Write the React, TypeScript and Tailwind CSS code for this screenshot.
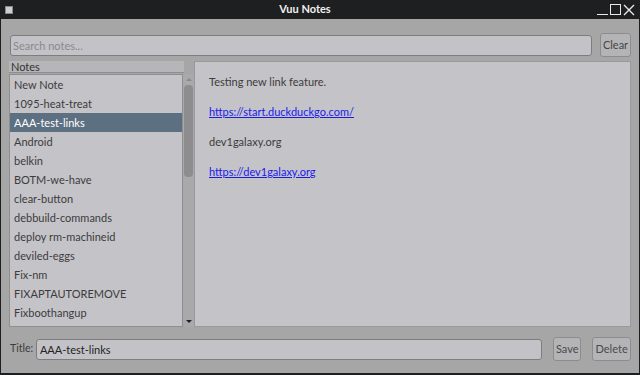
import { useState } from 'react';

const notes = [
  'New Note',
  '1095-heat-treat',
  'AAA-test-links',
  'Android',
  'belkin',
  'BOTM-we-have',
  'clear-button',
  'debbuild-commands',
  'deploy rm-machineid',
  'deviled-eggs',
  'Fix-nm',
  'FIXAPTAUTOREMOVE',
  'Fixboothangup',
];

const font = { fontFamily: 'Lato, "Open Sans", sans-serif' };

export default function App() {
  const [selected, setSelected] = useState('AAA-test-links');
  return (
    <div className="w-[640px] h-[375px] flex flex-col bg-[#1e1f21] text-[11px] text-[#3a3a3a]" style={font}>
      {/* title bar */}
      <div className="h-[19px] flex items-center px-[5px] text-white">
        <div className="w-[8px] h-[8px] bg-[#cfcfcf] border border-[#888]" />
        <div className="flex-1 text-center font-bold text-[11px] text-[#f0f0f0]">Vuu Notes</div>
        <div className="flex items-center gap-[2px] text-[#e8e8e8]">
          <div className="w-[11px] h-[11px] flex items-end"><div className="w-[11px] h-[1.5px] bg-[#e8e8e8]" /></div>
          <div className="w-[11px] h-[11px] border-[1.5px] border-[#e8e8e8]" />
          <svg width="12" height="12" viewBox="0 0 12 12" stroke="#e8e8e8" strokeWidth="1.4">
            <path d="M1 1 L11 11 M11 1 L1 11" />
          </svg>
        </div>
      </div>

      {/* body */}
      <div className="flex-1 mx-[1px] mb-[2px] bg-[#a6a6a6] flex flex-col px-[8px]">
        <div className="flex items-center gap-[8px] mt-[14px] h-[24px] pl-[1px]">
          <input
            className="flex-1 h-[21px] bg-[#c3c2c7] border border-[#7d7d80] rounded-[3px] px-[2px] text-[11px] outline-none placeholder:text-[#8a8a8c]"
            placeholder="Search notes..."
          />
          <button className="h-[24px] w-[31px] bg-[#b4b4b6] border border-[#8c8c8e] rounded-[3px] text-[11px] text-[#454545]">
            Clear
          </button>
        </div>

        <div className="flex mt-[4px] h-[266px]">
          {/* list */}
          <div className="w-[185px] flex flex-col">
            <div className="h-[12px] mr-[10px] bg-[#b6b6b8] border-b border-[#8e8e8e] leading-[11px] px-[2px] text-[11px] text-[#333]">
              Notes
            </div>
            <div className="flex-1 flex mt-[1px]">
              <div className="flex-1 bg-[#c4c3c8] border border-[#8f8f92] overflow-hidden">
                {notes.map((n) => (
                  <div
                    key={n}
                    onClick={() => setSelected(n)}
                    className={
                      n === selected
                        ? 'h-[19px] leading-[19px] px-[4px] bg-[#5c7082] text-white'
                        : 'h-[19px] leading-[19px] px-[4px] text-[#3c3c3c]'
                    }
                  >
                    {n}
                  </div>
                ))}
              </div>
              <div className="w-[11px] bg-[#a9a9ab] flex flex-col items-center">
                <div className="h-[11px] flex items-center justify-center">
                  <div className="w-0 h-0 border-l-[3px] border-r-[3px] border-b-[3px] border-l-transparent border-r-transparent border-b-[#8a8a8a]" />
                </div>
                <div className="w-[9px] h-[92px] bg-[#8d8d8f] rounded-[4px]" />
                <div className="flex-1" />
                <div className="h-[11px] flex items-center justify-center">
                  <div className="w-0 h-0 border-l-[3px] border-r-[3px] border-t-[3px] border-l-transparent border-r-transparent border-t-[#222]" />
                </div>
              </div>
            </div>
          </div>

          {/* content */}
          <div className="flex-1 bg-[#c4c3c8] border border-[#9a9a9c] pl-[14px] pt-[12px] text-[11px] text-[#3c3c3c] leading-[15px]">
            <p>Testing new link feature.</p>
            <p className="mt-[15px]">
              <a className="text-[#1a1aee] underline">https://start.duckduckgo.com/</a>
            </p>
            <p className="mt-[15px]">dev1galaxy.org</p>
            <p className="mt-[15px]">
              <a className="text-[#1a1aee] underline">https://dev1galaxy.org</a>
            </p>
          </div>
        </div>

        {/* bottom */}
        <div className="flex items-center mt-[10px] h-[24px] pl-[1px]">
          <span className="w-[26px] text-[10.5px] text-[#3c3c3c]">Title:</span>
          <input
            className="w-[509px] h-[21px] bg-[#c3c2c7] border border-[#7d7d80] rounded-[3px] px-[3px] text-[11px] text-[#222] outline-none"
            defaultValue="AAA-test-links"
          />
          <button className="ml-[11px] h-[24px] w-[28px] bg-[#b4b4b6] border border-[#8c8c8e] rounded-[3px] text-[11px] text-[#4a4a4a]">
            Save
          </button>
          <button className="ml-[11px] h-[24px] w-[39px] bg-[#b4b4b6] border border-[#8c8c8e] rounded-[3px] text-[11px] text-[#4a4a4a]">
            Delete
          </button>
        </div>
      </div>
    </div>
  );
}
